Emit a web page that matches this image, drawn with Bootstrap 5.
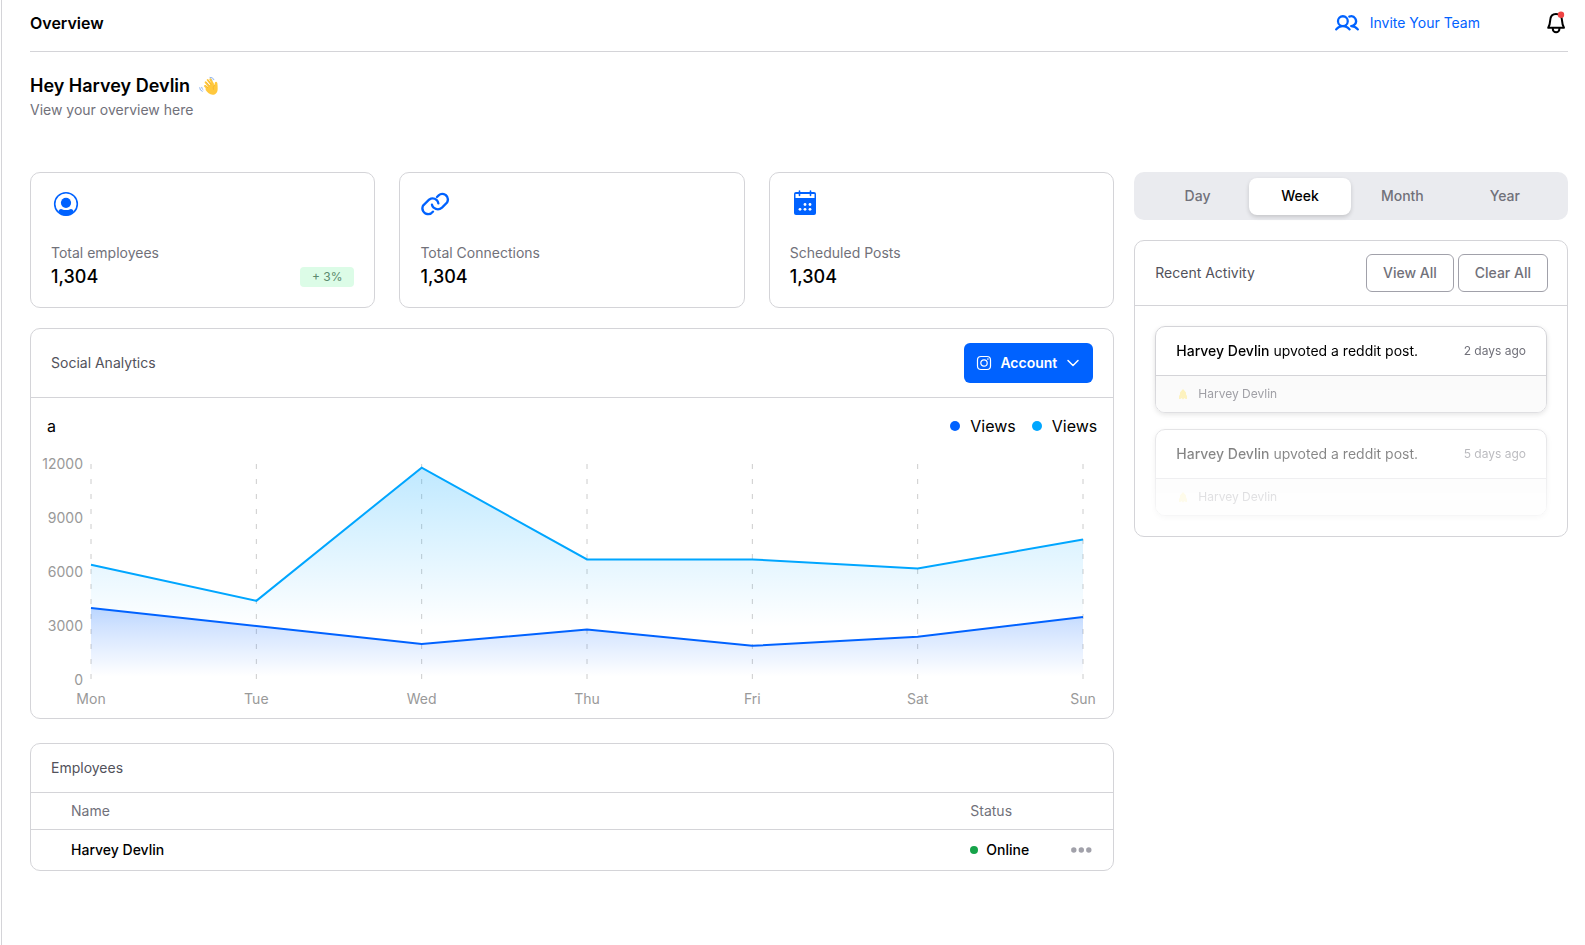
<!DOCTYPE html>
<html lang="en">
<head>
<meta charset="utf-8">
<meta name="viewport" content="width=device-width, initial-scale=1">
<title>Overview</title>
<link href="https://cdn.jsdelivr.net/npm/bootstrap@5.3.0/dist/css/bootstrap.min.css" rel="stylesheet">
<style>
  :root { --line: #d4d4d8; --muted: #71717a; --blue: #0062ff; --sky: #00a6ff; }
  body { font-family: Inter, "Liberation Sans", sans-serif; font-size: 14px; line-height: 20px; color: #000; }
  svg { display: block; flex: none; }
  .page-shell { margin-left: 1px; border-left: 1px solid var(--line); padding: 0 17px 24px 28px; }
  .topbar { height: 52px; padding-bottom: 5px; border-bottom: 1px solid var(--line); }
  .topbar h1 { font-size: 16px; line-height: 24px; font-weight: 600; }
  .invite { color: var(--blue); gap: 11px; margin-right: 66px; }
  .icon-button { padding: 0; border: 0; background: none; color: #000; }
  .welcome { margin: 20px 0 52px; }
  .welcome h2 { font-size: 18px; line-height: 28px; font-weight: 600; gap: 9px; }
  .text-soft { color: var(--muted); }
  .board { display: grid; gap: 20px; grid-template-columns: minmax(0, 1fr); }
  @media (min-width: 1100px) { .board { grid-template-columns: minmax(0, 5fr) minmax(0, 2fr); } }
  .panel { border: 1px solid var(--line); border-radius: 10px; background: #fff; }
  .panel-head { padding: 0 20px; border-bottom: 1px solid var(--line); }
  .panel-head h3 { font-size: 14px; line-height: 20px; font-weight: 400; color: #52525b; }
  .stats { --bs-gutter-x: 24px; --bs-gutter-y: 20px; }
  .stat { padding: 16px 20px; }
  .stat-icon { color: var(--blue); margin-bottom: 24px; }
  .stat-value { font-size: 18px; line-height: 28px; font-weight: 500; }
  .growth { background: #dcfce7; color: #5b8a6e; font-size: 12px; line-height: 20px; padding: 0 12px; border-radius: 4px; }
  .analytics { margin: 20px 0 24px; }
  .analytics .panel-head { height: 69px; }
  .account { background: var(--blue); color: #fff; height: 40px; padding: 0 12px; gap: 8px; border: 0; border-radius: 6px; font-weight: 600; }
  .legend-row { font-size: 16px; line-height: 24px; padding: 16px 16px 6px; }
  .legend-dot { width: 10px; height: 10px; border-radius: 50%; }
  .legend-row .entry { gap: 10px; }
  .plot { height: 274px; }
  .plot svg { width: 100%; height: 274px; }
  .plot text { font-size: 14px; fill: #999; }
  .staff .panel-head { height: 49px; }
  .staff table { margin: 0; color: #000; }
  .staff th, .staff td { border: 0; vertical-align: middle; padding: 0; background: none; }
  .staff th { height: 36px; font-weight: 400; color: var(--muted); }
  .staff thead tr { border-bottom: 1px solid var(--line); }
  .staff td { height: 41px; font-weight: 500; }
  .staff .c-name { padding-left: 40px; }
  .staff .c-status { width: 101px; }
  .staff .c-menu { width: 42px; }
  .status-dot { width: 8px; height: 8px; border-radius: 50%; background: #16a34a; }
  .period { background: #eaebef; border-radius: 10px; padding: 6px 12px 5px; margin-bottom: 20px; }
  .period .nav-link { height: 37px; padding: 0 0 2px; color: var(--muted); font-weight: 500; border-radius: 8px; }
  .period .nav-link.active { background: #fff; color: #000; box-shadow: 0 2px 4px rgba(0, 0, 0, .16); }
  .recent .panel-head { height: 65px; padding-right: 19px; }
  .outline { height: 38px; padding: 0 16px; border: 1px solid #a1a1aa; border-radius: 6px; background: #fff; color: var(--muted); font-weight: 500; }
  .feed { padding: 20px; gap: 16px; -webkit-mask-image: linear-gradient(#000 30%, rgba(0,0,0,.48) 64%, rgba(0,0,0,.2) 91%); mask-image: linear-gradient(#000 30%, rgba(0,0,0,.48) 64%, rgba(0,0,0,.2) 91%); }
  .feed-item { border: 1px solid var(--line); border-radius: 10px; box-shadow: 0 2px 5px rgba(0, 0, 0, .13); overflow: hidden; }
  .feed-main { height: 49px; padding: 0 20px; border-bottom: 1px solid var(--line); }
  .feed-foot { height: 36px; padding: 0 20px; gap: 8px; font-size: 12px; background: #fafafa; color: #929299; }
  .feed-time { font-size: 12px; }
  .fw-mid { font-weight: 500; }
</style>
</head>
<body>
<div class="page-shell min-vh-100">
  <header class="topbar d-flex align-items-center justify-content-between">
    <h1 class="m-0">Overview</h1>
    <div class="d-flex align-items-center">
      <a href="#" class="invite d-flex align-items-center text-decoration-none">
        <svg width="24" height="24" viewBox="0 0 256 256" fill="currentColor" aria-hidden="true"><path d="M125.18,156.94a64,64,0,1,0-82.36,0,100.23,100.23,0,0,0-39.49,32,12,12,0,0,0,19.35,14.2,76,76,0,0,1,122.64,0,12,12,0,0,0,19.36-14.2A100.33,100.33,0,0,0,125.18,156.94ZM44,108a40,40,0,1,1,40,40A40,40,0,0,1,44,108Zm206.1,97.67a12,12,0,0,1-16.78-2.57A76.31,76.31,0,0,0,172,172a12,12,0,0,1,0-24,40,40,0,1,0-14.85-77.16,12,12,0,1,1-8.92-22.28,64,64,0,0,1,65,108.38,100.23,100.23,0,0,1,39.49,32A12,12,0,0,1,250.1,205.67Z"/></svg>
        <span>Invite Your Team</span>
      </a>
      <button type="button" class="icon-button" aria-label="Notifications">
        <svg width="22" height="24" viewBox="0 0 22 24" fill="none" stroke="currentColor" stroke-width="2" stroke-linecap="round" stroke-linejoin="round"><path d="M10 3c-3.700 0-5.600 2.900-5.800 6.200-.2 3.300-.2 4.600-2 7.600h15.800c-1.800-3-1.800-4.300-2-7.600-.2-3.300-2.200-6.200-6-6.200zM6.800 18a3.300 3.300 0 0 0 6.600 0"/><circle cx="15" cy="3.800" r="3.200" fill="#ef4444" stroke="none"/></svg>
      </button>
    </div>
  </header>

  <section class="welcome">
    <h2 class="m-0 d-flex align-items-center">Hey Harvey Devlin
      <svg width="20" height="20" viewBox="0 0 60 60" fill="none" stroke-linecap="round" role="img" aria-label="Waving hand"><g stroke="#8fb4ef" stroke-width="3"><path d="M2 35q0 9 8 11M8 34q0 5 4 7M33 4q9-1 12 7M34 9q4-1 6 3"/></g><path d="M20 36 40 21 46 27 48 19Q52 15 55 21 56 28 56 38C56 50 49 56 41 56 32 56 25 49 20 42z" fill="#ffc83d"/><g stroke="#ffc83d" stroke-width="6"><path d="M42 24 34 10M38 27 26 12M32 33 20 19M27 39 18 30"/></g><path d="M36 25 29 15M31 30 23 20M26 35l-6-7M46 28q-6 5-3 12" stroke="#e8a52a" stroke-width="1.500"/></svg>
    </h2>
    <p class="m-0 text-soft">View your overview here</p>
  </section>

  <main class="board align-items-start">
    <div>
      <div class="row stats">
        <div class="col-12 col-md-4">
          <article class="panel stat h-100">
            <svg class="stat-icon" width="30" height="30" viewBox="0 0 30 30" aria-hidden="true"><circle cx="15" cy="15" r="11.300" fill="none" stroke="currentColor" stroke-width="1.600"/><circle cx="15" cy="13.800" r="5.100" fill="currentColor"/><path d="M7.200 22.200q1.800-2.800 3.600-2 4.200 1.800 8.400 0 1.800-.8 3.600 2-2.800 4.600-7.800 4.600t-7.800-4.600z" fill="currentColor"/></svg>
            <div class="text-soft">Total employees</div>
            <div class="d-flex align-items-center justify-content-between"><span class="stat-value">1,304</span><span class="growth">+ 3%</span></div>
          </article>
        </div>
        <div class="col-12 col-md-4">
          <article class="panel stat h-100">
            <svg class="stat-icon" width="30" height="30" viewBox="0 8 90 90" fill="none" stroke="currentColor" stroke-width="7" stroke-linecap="round" aria-hidden="true"><path d="M51 32 56 27Q65 19 77 26 88 35 81 49L66 64Q54 74 41 64 37 60 36 55"/><path d="M39 76Q31 87 17 82 3 73 9 58L27 40Q39 32 50 41 54 45 55 51"/></svg>
            <div class="text-soft">Total Connections</div>
            <div class="stat-value">1,304</div>
          </article>
        </div>
        <div class="col-12 col-md-4">
          <article class="panel stat h-100">
            <svg class="stat-icon" width="30" height="30" viewBox="0 0 30 30" aria-hidden="true"><rect x="4" y="3" width="22" height="23" rx="2" fill="currentColor"/><path d="M5.500 5h19v4h-19z" fill="#fff"/><path d="M9.500 2v4.500M20.500 2v4.500" stroke="currentColor" stroke-width="1.600" stroke-linecap="round"/><g fill="#fff"><circle cx="15" cy="15.500" r="1.400"/><circle cx="20" cy="15.500" r="1.400"/><circle cx="10" cy="20.300" r="1.400"/><circle cx="15" cy="20.300" r="1.400"/><circle cx="20" cy="20.300" r="1.400"/></g></svg>
            <div class="text-soft">Scheduled Posts</div>
            <div class="stat-value">1,304</div>
          </article>
        </div>
      </div>

      <section class="panel analytics">
        <div class="panel-head d-flex align-items-center justify-content-between">
          <h3 class="m-0">Social Analytics</h3>
          <button type="button" class="account d-flex align-items-center">
            <svg width="16" height="16" viewBox="0 0 16 16" fill="none" stroke="currentColor" aria-hidden="true"><rect x="1.500" y="1.500" width="13" height="13" rx="3.500" stroke-width="1.200"/><circle cx="8" cy="8" r="3.200" stroke-width="1.200"/><circle cx="11.900" cy="4.100" r=".8" fill="currentColor" stroke="none"/></svg>
            <span>Account</span>
            <svg width="16" height="16" viewBox="0 0 16 16" fill="none" stroke="currentColor" stroke-width="1.500" stroke-linecap="round" stroke-linejoin="round" aria-hidden="true"><path d="M3 5.500l5 5 5-5"/></svg>
          </button>
        </div>
        <div class="legend-row d-flex align-items-center justify-content-between">
          <span>a</span>
          <div class="d-flex gap-3">
            <span class="entry d-flex align-items-center"><i class="legend-dot" style="background:#0062ff"></i>Views</span>
            <span class="entry d-flex align-items-center"><i class="legend-dot" style="background:#00a6ff"></i>Views</span>
          </div>
        </div>
        <div class="plot" id="plot"></div>
      </section>

      <section class="panel staff">
        <div class="panel-head d-flex align-items-center"><h3 class="m-0">Employees</h3></div>
        <table class="table">
          <thead><tr><th class="c-name" scope="col">Name</th><th class="c-status" scope="col">Status</th><th class="c-menu"></th></tr></thead>
          <tbody><tr>
            <td class="c-name">Harvey Devlin</td>
            <td><span class="d-flex align-items-center gap-2"><i class="status-dot"></i>Online</span></td>
            <td><button type="button" class="icon-button d-block" aria-label="More actions"><svg width="22" height="10" viewBox="0 0 22 10" fill="#a1a1aa"><circle cx="2.800" cy="5" r="2.700"/><circle cx="10.300" cy="5" r="2.700"/><circle cx="17.800" cy="5" r="2.700"/></svg></button></td>
          </tr></tbody>
        </table>
      </section>
    </div>

    <aside>
      <div class="period nav nav-pills nav-fill flex-nowrap" role="tablist">
        <div class="nav-item flex-fill w-25"><button type="button" class="nav-link" role="tab">Day</button></div>
        <div class="nav-item flex-fill w-25"><button type="button" class="nav-link active" role="tab" aria-selected="true">Week</button></div>
        <div class="nav-item flex-fill w-25"><button type="button" class="nav-link" role="tab">Month</button></div>
        <div class="nav-item flex-fill w-25"><button type="button" class="nav-link" role="tab">Year</button></div>
      </div>
      <section class="panel recent">
        <div class="panel-head d-flex align-items-center justify-content-between">
          <h3 class="m-0">Recent Activity</h3>
          <div class="d-flex gap-1"><button type="button" class="outline">View All</button><button type="button" class="outline">Clear All</button></div>
        </div>
        <div class="feed d-flex flex-column">
          <article class="feed-item">
            <div class="feed-main d-flex align-items-center justify-content-between"><span><span class="fw-mid">Harvey Devlin</span> upvoted a reddit post.</span><time class="feed-time text-soft">2 days ago</time></div>
            <div class="feed-foot d-flex align-items-center"><svg width="14" height="14" viewBox="0 0 14 14" fill="#fdf0b5" aria-hidden="true"><path d="M7 2l3 3.500v2l1 1.500v3H9.500L8.500 11 7 12.500 5.500 11l-1 1H3V9l1-1.500v-2z"/></svg><span>Harvey Devlin</span></div>
          </article>
          <article class="feed-item">
            <div class="feed-main d-flex align-items-center justify-content-between"><span><span class="fw-mid">Harvey Devlin</span> upvoted a reddit post.</span><time class="feed-time text-soft">5 days ago</time></div>
            <div class="feed-foot d-flex align-items-center"><svg width="14" height="14" viewBox="0 0 14 14" fill="#fdf0b5" aria-hidden="true"><path d="M7 2l3 3.500v2l1 1.500v3H9.500L8.500 11 7 12.500 5.500 11l-1 1H3V9l1-1.500v-2z"/></svg><span>Harvey Devlin</span></div>
          </article>
        </div>
      </section>
    </aside>
  </main>
</div>
<script src="https://cdn.jsdelivr.net/npm/bootstrap@5.3.0/dist/js/bootstrap.bundle.min.js"></script>
<script>
  const days = ['Mon', 'Tue', 'Wed', 'Thu', 'Fri', 'Sat', 'Sun'];
  const series = [
    { id: 'sky', color: '#00a6ff', end: '75%', values: [6400, 4400, 11800, 6700, 6700, 6200, 7800] },
    { id: 'blue', color: '#0062ff', end: '95%', values: [4000, 3000, 2000, 2800, 1900, 2400, 3500] }
  ];
  const plot = document.getElementById('plot');

  // Redraws the area chart at the panel's current width.
  function drawChart() {
    const left = 60, right = plot.clientWidth - 30, top = 20, bottom = 236;
    const x = i => left + (right - left) * i / (days.length - 1);
    const y = v => bottom - (bottom - top) * v / 12000;
    let out = '<svg role="img" aria-label="Views per day"><defs>';
    for (const s of series) {
      out += `<linearGradient id="${s.id}" x1="0" y1="0" x2="0" y2="1"><stop offset="0" stop-color="${s.color}" stop-opacity=".25"/><stop offset="${s.end}" stop-color="${s.color}" stop-opacity="0"/></linearGradient>`;
    }
    out += '</defs>';
    days.forEach((d, i) => {
      out += `<line x1="${x(i)}" x2="${x(i)}" y1="${top}" y2="${bottom}" stroke="#ccc" stroke-dasharray="5 10"/>`;
      out += `<text x="${x(i)}" y="260" text-anchor="middle">${d}</text>`;
    });
    for (let v = 0; v <= 12000; v += 3000) {
      out += `<text x="${left - 8}" y="${y(v) + 5}" text-anchor="end">${v}</text>`;
    }
    for (const s of series) {
      const pts = s.values.map((v, i) => x(i) + ',' + y(v)).join(' ');
      out += `<polygon points="${left},${bottom} ${pts} ${right},${bottom}" fill="url(#${s.id})"/>`;
      out += `<polyline points="${pts}" fill="none" stroke="${s.color}" stroke-width="2"/>`;
    }
    plot.innerHTML = out + '</svg>';
  }
  drawChart();
  window.addEventListener('resize', drawChart);
</script>
</body>
</html>
